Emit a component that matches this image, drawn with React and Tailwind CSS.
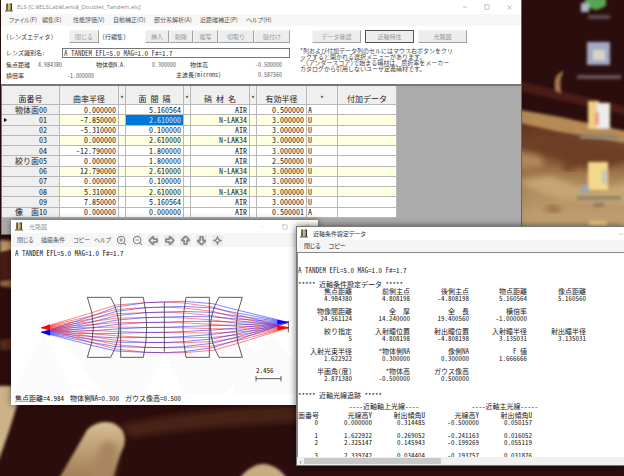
import { ZoomIn, ZoomOut, ArrowBigLeft, ArrowBigRight, ArrowBigUp, ArrowBigDown, Minus, Square, X } from "lucide-react";

const HALF = "[font-feature-settings:'hwid']";

const surfaces = [
  ["物体面00", "0.000000", "5.160564", "AIR", "0.500000", "A"],
  ["01", "-7.850000", "2.610000", "N-LAK34", "3.000000", "U"],
  ["02", "-5.310000", "0.100000", "AIR", "3.000000", "U"],
  ["03", "0.000000", "2.610000", "N-LAK34", "3.000000", "U"],
  ["04", "-12.790000", "1.800000", "AIR", "3.000000", "U"],
  ["絞り面05", "0.000000", "1.800000", "AIR", "2.500000", "U"],
  ["06", "12.790000", "2.610000", "N-LAK34", "3.000000", "U"],
  ["07", "0.000000", "0.100000", "AIR", "3.000000", "U"],
  ["08", "5.310000", "2.610000", "N-LAK34", "3.000000", "U"],
  ["09", "7.850000", "5.160564", "AIR", "3.000000", "U"],
  ["像\u3000\u3000面10", "0.000000", "0.000000", "AIR", "0.500001", "A"],
];

const paraxial = [
  [["焦点距離", "4.984380"], ["前側主点", "4.808198"], ["後側主点", "-4.808198"], ["物点距離", "5.160564"], ["像点距離", "5.160560"]],
  [["物像間距離", "24.561124"], ["全\u3000\u3000厚", "14.240000"], ["全\u3000\u3000長", "19.400560"], ["横倍率", "-1.000000"]],
  [["絞り指定", "5"], ["入射瞳位置", "4.808198"], ["射出瞳位置", "-4.808198"], ["入射瞳半径", "3.135031"], ["射出瞳半径", "3.135031"]],
  [["入射光束半径", "1.622922"], ["*物体側NA", "0.300000"], ["像側NA", "0.300000"], ["F 値", "1.666666"]],
  [["半画角(度)", "2.871380"], ["*物体高", "-0.500000"], ["ガウス像高", "0.500000"]],
];

const trace = [
  ["0", "0.000000", "0.314485", "-0.500000", "0.050157"],
  null,
  ["1", "1.622922", "0.269052", "-0.241163", "0.016052"],
  ["2", "2.325147", "0.145943", "-0.199269", "0.055119"],
  null,
  ["3", "2.339742", "0.034404", "-0.193757", "0.031876"],
];

const menus = ["ファイル(F)", "編集(E)", "性能評価(V)", "自動補正(O)", "部分系解析(A)", "近距離補正(P)", "ヘルプ(H)"];

function AppIcon() {
  return (
    <svg viewBox="0 0 8 9" className="h-[9px] w-2 shrink-0" aria-hidden="true">
      <path d="M1.2 0.5h2.2v7H1.2z" fill="#3d6b2c" />
      <path d="M1.2 3h1v4.500h-1z" fill="#c0562c" />
      <path d="M4.600 0.500h2.400v7H4.600z" fill="#3a2a20" />
      <path d="M4.800 1.500h1v5h-1z" fill="#d8b848" />
      <path d="M0 7.500h8v1H0z" fill="#5a4a30" />
    </svg>
  );
}

function PanIcon({ size }) {
  return (
    <svg viewBox="0 0 24 24" width={size} height={size} aria-hidden="true">
      <path d="M12 1L15.500 8.500L23 12L15.500 15.500L12 23L8.500 15.500L1 12L8.500 8.500z" fill="currentColor" />
      <path d="M12 9v6M9 12h6" stroke="#f6f6f6" strokeWidth="2" />
    </svg>
  );
}

function ToolButton({ children, className = "" }) {
  return (
    <button
      type="button"
      className={`h-[13px] whitespace-nowrap border border-b-[#a2a2a2] border-l-[#f4f4f4] border-r-[#a2a2a2] border-t-[#f4f4f4] bg-[#ededed] text-[6px] leading-none text-[#989898] ${className}`}
    >
      {children}
    </button>
  );
}

function Desktop() {
  return (
    <svg viewBox="0 0 624 476" preserveAspectRatio="xMidYMid slice" className="absolute inset-0 h-full w-full" aria-hidden="true">
      <defs>
        <filter id="soft" x="-20%" y="-20%" width="140%" height="140%"><feGaussianBlur stdDeviation="3" /></filter>
        <filter id="fine" x="-30%" y="-30%" width="160%" height="160%"><feGaussianBlur stdDeviation="1.500" /></filter>
        <linearGradient id="wood" x1="0" y1="0" x2="0" y2="1">
          <stop offset="0" stopColor="#5e301d" />
          <stop offset="0.300" stopColor="#7c4d2e" />
          <stop offset="0.500" stopColor="#a98255" />
          <stop offset="1" stopColor="#cbae80" />
        </linearGradient>
        <linearGradient id="finger" x1="0" y1="0" x2="0" y2="1">
          <stop offset="0" stopColor="#d8bf93" />
          <stop offset="1" stopColor="#a07a52" />
        </linearGradient>
      </defs>
      <rect width="624" height="476" fill="#2b0d0d" />
      <path d="M515 80L630 108V116L515 90z" fill="#4a1f14" filter="url(#fine)" />
      <path d="M515 118L630 140V240H515z" fill="url(#wood)" filter="url(#fine)" />
      <path d="M515 109L560 117L630 132V144L560 132L515 122z" fill="#b58a55" filter="url(#fine)" />
      <path d="M515 145L545 154L570 165L600 170L630 160V150L570 138z" fill="#6d3d25" filter="url(#soft)" />
      <path d="M515 182L550 176L590 190L630 182V205L560 200z" fill="#c6a673" filter="url(#soft)" />
      <path d="M515 150L540 156L545 166L515 170z" fill="#b08a5c" filter="url(#soft)" />
      <ellipse cx="553" cy="209" rx="8" ry="3" fill="#8f6238" filter="url(#soft)" />
      <ellipse cx="569" cy="167" rx="7" ry="3" fill="#64351f" filter="url(#soft)" />
      <path d="M562 73Q554 76 556 90L560 92Q558 78 562 73z" fill="#a87850" stroke="#a87850" strokeWidth="2" filter="url(#fine)" />
      <path d="M0 240L14 241V250L0 253z" fill="#b89468" filter="url(#fine)" />
      <path d="M0 253L14 250V276L0 280z" fill="#4a1c14" filter="url(#fine)" />
      <path d="M0 281L14 279V288L0 286z" fill="#90663f" filter="url(#fine)" />
      <path d="M0 340L14 338V350L0 350z" fill="#542a1c" filter="url(#fine)" />
      <path d="M-6 386H12Q22 396 16 408Q10 430 -2 462z" fill="#cdb289" filter="url(#fine)" />
      <path d="M120 425Q200 408 300 404V422Q200 426 130 438z" fill="#4a2018" filter="url(#soft)" />
      <path d="M58 480Q78 446 87 430Q98 419 113 423Q128 430 124 446Q118 458 112 480z" fill="url(#finger)" filter="url(#fine)" />
      <path d="M95 480Q93 455 104 442Q116 440 118 450L112 480z" fill="#a98660" filter="url(#soft)" />
      <path d="M238 480Q250 464 264 464Q278 465 288 480z" fill="#c9ad82" filter="url(#fine)" />
      <g filter="url(#fine)">
        <path d="M585 -2H606V6L597 10L585 7z" fill="#59a552" />
        <rect x="581" y="3" width="8" height="9" fill="#a9b9c9" />
        <rect x="588" y="15" width="22" height="4" fill="#5c4a52" />
        <rect x="587" y="42" width="23" height="23" fill="#a3a9c6" />
        <rect x="593" y="50" width="12" height="10" fill="#d8d4c4" />
        <rect x="577" y="75" width="44" height="4" fill="#66525a" />
        <rect x="588" y="101" width="11" height="28" fill="#f0cf84" />
        <rect x="597" y="103" width="13" height="26" fill="#efecec" />
        <rect x="595" y="112" width="4" height="13" fill="#ea9a86" />
        <rect x="580" y="135" width="38" height="4" fill="#8d8272" />
        <rect x="588" y="162" width="20" height="28" fill="#f4d88b" />
        <rect x="602" y="170" width="5" height="14" fill="#bcc9bd" />
        <rect x="581" y="185" width="8" height="8" fill="#9aa5ac" />
        <rect x="577" y="196" width="44" height="4" fill="#8f8568" />
        <rect x="594" y="203" width="10" height="4" fill="#8f7c60" />
        <rect x="589" y="221" width="18" height="8" fill="#f0cc7c" />
      </g>
    </svg>
  );
}

const RAYS = 11;

function rayPoints(index, field) {
  const s = index / (RAYS - 1);
  const between = (a, b) => a + (b - a) * s;
  const start = field === "red" ? 128 : 142;
  const end = field === "red" ? 128 : 112;
  const rise = field === "red" ? [82, 174, 60, 192] : [92, 182, 66, 198];
  const fall = field === "red" ? [66, 196, 89, 176] : [56, 188, 75, 165];
  return [
    [125, start],
    [279, between(rise[0], rise[1])],
    [348, between(rise[2], rise[3])],
    [437, between(53, 202)],
    [493, between(51, 203)],
    [551, between(field === "red" ? 54 : 49, field === "red" ? 203 : 200)],
    [638, between(fall[0], fall[1])],
    [711, between(fall[2], fall[3])],
    [865, end],
  ].map((p) => p.join(",")).join(" ");
}

function RayDiagram() {
  return (
    <svg viewBox="0 0 855 318" className="block h-[106px] w-[285px]" role="img" aria-label="光路図">
      <g transform="translate(-33 -9)">
        <g fill="#fbfbfb">
          <path d="M130 142L30 339H230z" />
          <path d="M230 142L190 160L310 339H430L493 205L560 339H660L780 220L720 150z" />
          <path d="M815 140L700 300V339H888V240z" />
        </g>
        <g fill="none" strokeWidth="2.200" strokeOpacity="0.750">
          {Array.from({ length: RAYS }, (_, i) => (
            <g key={i}>
              <polyline points={rayPoints(i, "red")} stroke="#ff2020" />
              <polyline points={rayPoints(i, "blue")} stroke="#2020ff" />
            </g>
          ))}
        </g>
        <path d="M124 128L150 118V136z" fill="#f00" />
        <path d="M124 142L150 134V152z" fill="#00f" />
        <path d="M864 112L832 104V118z" fill="#00f" />
        <path d="M864 128L832 122V136z" fill="#f00" />
        <g fill="none" stroke="#333" strokeWidth="2.400">
          <path d="M262 37H332Q382 127 332 217H262Q298 127 262 37z" />
          <path d="M362 37H430Q450 127 430 217H362z" />
          <path d="M558 37H628V217H558Q540 127 558 37z" />
          <path d="M657 37H727Q690 127 727 217H657Q606 127 657 37z" />
          <path d="M493 52V200M865 108V142" />
          <path d="M768 281H843M768 273V289M843 273V289" />
        </g>
      </g>
    </svg>
  );
}

function MainWindow() {
  const th = "border-r border-[#b8b8b8] p-0 pb-px align-bottom font-normal";
  const td = "border-b border-r border-[#b8b8b8] p-0 leading-none";
  return (
    <section className="absolute left-px top-0 flex h-[235px] w-[521px] flex-col border-b border-r border-[#666] bg-white shadow-lg">
      <header className="flex h-[14px] items-center gap-1 pl-1 text-[7px] text-[#888]">
        <AppIcon />
        <h1 className="grow font-['Open_Sans','Noto_Sans_CJK_JP',sans-serif] text-[6px]">ELS [C:¥ELSLab¥Lens¥_Doublet_Tandem.els]</h1>
        <div className="flex gap-4 pr-2 text-[#888]">
          <button type="button" aria-label="最小化"><Minus size={6} /></button>
          <button type="button" aria-label="最大化"><Square size={6} /></button>
          <button type="button" aria-label="閉じる"><X size={7} /></button>
        </div>
      </header>
      <nav className="grid h-3 grid-cols-[33px_31px_40px_41px_46px_46px_auto] items-center justify-start bg-[#f7f7f7] pl-2 text-[6px] leading-none text-[#555] [font-feature-settings:'palt']">
        {menus.map((m) => <button key={m} type="button" className="whitespace-nowrap text-left">{m}</button>)}
      </nav>
      <div className={`flex h-[58px] shrink-0 gap-[10px] pl-[5px] text-[6px] leading-none text-[#333] ${HALF}`}>
        <div className="flex w-[284px] shrink-0 flex-col pt-1">
          <div className="flex items-center whitespace-nowrap">
            <span className="w-[63px]">(レンズエディタ)</span>
            <ToolButton className="w-[30px]">閉じる</ToolButton>
            <span className="w-[46px] pl-[3px]">(行編集)</span>
            <ToolButton className="w-6">挿入</ToolButton>
            <ToolButton className="w-6">削除</ToolButton>
            <ToolButton className="w-[25px]">複写</ToolButton>
            <ToolButton className="w-9">切取り</ToolButton>
            <ToolButton className="w-9">貼付け</ToolButton>
          </div>
          <div className="flex items-center pt-[5px]">
            <label htmlFor="lens" className="w-14 whitespace-nowrap">レンズ識別名：</label>
            <input id="lens" defaultValue="A TANDEM EFL=5.0 MAG=1.0 F#=1.7" className="h-[10px] min-w-0 grow border border-[#777] px-px text-[7px] leading-none" />
          </div>
          <dl className="grid grid-cols-[32px_58px_56px_38px_49px_auto] gap-y-1 whitespace-nowrap pt-1">
            <dt>焦点距離</dt><dd className="text-[#666]">4.984380</dd>
            <dt>物体側N.A.</dt><dd className="text-[#666]">0.300000</dd>
            <dt>物体高</dt><dd className="pl-4 text-[#666]">-0.500000</dd>
            <dt className="pt-px">横倍率</dt><dd className="col-span-2 pl-[29px] pt-px text-[#666]">-1.000000</dd>
            <dt className="col-span-2 pl-6">主波長(microns)</dt><dd className="pl-[19px] text-[#666]">0.587560</dd>
          </dl>
        </div>
        <div className="flex flex-col gap-[5px] pt-1">
          <div className="flex gap-1 pl-3">
            <ToolButton className="w-[49px]">データ確認</ToolButton>
            <ToolButton className="w-[49px] outline outline-1 -outline-offset-1 outline-[#555]">近軸特性</ToolButton>
            <ToolButton className="w-[49px]">光路図</ToolButton>
          </div>
          <p className="whitespace-pre leading-[6px] text-[#444]">
            {"*列および付加データ列のセルにはマウス右ボタンをクリ\nックすると開かれる選択メニューがあります。\n“_（アンダースコア）で始まる硝材は、屈折率をメーカー\nカタログから引用しないユーザ定義硝材です。"}
          </p>
        </div>
      </div>
      <div className="min-h-0 grow overflow-hidden border-l border-t-2 border-[#777] bg-[#ababab]">
        <table className={`h-[132px] w-[395px] table-fixed border-separate border-spacing-0 bg-white text-[8px] leading-none text-[#222] ${HALF}`}>
          <colgroup>
            <col className="w-[58px]" /><col className="w-[59px]" /><col className="w-[7px]" /><col className="w-[58px]" /><col className="w-[7px]" />
            <col className="w-[59px]" /><col className="w-[7px]" /><col className="w-[50px]" /><col className="w-[31px]" /><col className="w-[59px]" />
          </colgroup>
          <thead>
            <tr className="h-[19px] bg-[#efefef]">
              {["面番号", "曲率半径", "*", "面 間 隔", "*", "硝 材 名", "*", "有効半径", "*", "付加データ"].map((h, i) => (
                <th key={i} scope="col" className={`${th} border-b`}>{h}</th>
              ))}
            </tr>
          </thead>
          <tbody>
            {surfaces.map((r, i) => (
              <tr key={r[0]} className={r[3] === "AIR" ? "bg-white" : "bg-[#ffffe1]"}>
                <th scope="row" className={`${td} bg-[#efefef] pr-3 text-right font-normal`}>
                  <span className="flex items-center justify-end whitespace-nowrap">
                    {i === 1 && <span className="ml-[2px] mr-auto border-y-2 border-l-[3px] border-y-transparent border-l-black" />}
                    {r[0]}
                  </span>
                </th>
                <td className={`${td} pr-[2px] text-right`}>{r[1]}</td>
                <td className={td} />
                <td className={`${td} pr-[2px] text-right ${i === 1 ? "bg-[#0078d7] text-[#cfe6fa]" : ""}`}>{r[2]}</td>
                <td className={td} />
                <td className={`${td} pr-[2px] text-right`}>{r[3]}</td>
                <td className={td} />
                <td className={`${td} pr-[2px] text-right`}>{r[4]}</td>
                <td className={`${td} pl-px text-left`}>{r[5]}</td>
                <td className={td} />
              </tr>
            ))}
          </tbody>
        </table>
      </div>
    </section>
  );
}

function RayWindow() {
  const icons = [["拡大", ZoomIn], ["縮小", ZoomOut], ["左", ArrowBigLeft], ["右", ArrowBigRight], ["上", ArrowBigUp], ["下", ArrowBigDown], ["移動", PanIcon]];
  return (
    <section className="absolute left-[11px] top-[220px] flex h-[185px] w-[307px] flex-col bg-white shadow-[0_0_6px_rgba(0,0,0,0.5)]">
      <header className="flex h-[13px] shrink-0 items-center gap-[6px] pl-1 text-[6px] text-[#999]">
        <AppIcon />
        <h2 className="grow">光路図</h2>
        <div className="flex gap-4 pr-[7px]">
          <button type="button" aria-label="最小化" className="text-[#ddd]"><Minus size={6} /></button>
          <button type="button" aria-label="最大化"><Square size={6} /></button>
          <button type="button" aria-label="閉じる"><X size={7} /></button>
        </div>
      </header>
      <nav className="flex h-[14px] shrink-0 items-center bg-[#f6f6f6] pl-[6px] text-[6px] leading-none text-[#555] [font-feature-settings:'palt']">
        <div className="grid w-[99px] shrink-0 grid-cols-[24px_32px_21px_auto]">
          {["閉じる", "描画条件", "コピー", "ヘルプ"].map((m) => <button key={m} type="button" className="whitespace-nowrap text-left">{m}</button>)}
        </div>
        <div className="flex gap-[5px] text-[#8a8a8a]">
          {icons.map(([name, Icon], i) => (
            <button key={name} type="button" aria-label={name} className={i > 1 ? "bg-[#ebebeb]" : ""}>
              <Icon size={11} strokeWidth={i > 1 ? 4 : 2.5} />
            </button>
          ))}
        </div>
      </nav>
      <div className={`flex grow flex-col pt-[3px] text-[7px] leading-none text-[#111] ${HALF}`}>
        <p className="whitespace-nowrap pl-1">A TANDEM EFL=5.0 MAG=1.0 F#=1.7</p>
        <div className="relative pt-[31px]">
          <RayDiagram />
          <span className="absolute bottom-5 left-[245px]">2.456</span>
        </div>
        <p className="flex gap-[6px] whitespace-nowrap pl-1 pt-px">
          <span>焦点距離＝4.984</span><span>物体側NA＝0.300</span><span>ガウス像高＝0.500</span>
        </p>
      </div>
    </section>
  );
}

function DataWindow() {
  return (
    <section className="absolute left-[296px] right-0 top-[226px] flex h-[240px] flex-col border border-r-0 border-[#777] bg-white shadow-[0_0_7px_rgba(0,0,0,0.6)]">
      <header className="flex h-[13px] shrink-0 items-center gap-[5px] pl-[3px] text-[6px] text-[#333]">
        <AppIcon />
        <h2 className="grow [font-feature-settings:'palt']">近軸条件設定データ</h2>
        <button type="button" aria-label="最小化" className="text-[#999]"><Minus size={6} /></button>
      </header>
      <nav className="flex h-3 shrink-0 items-center gap-2 bg-[#f5f5f5] pl-[7px] text-[6px] leading-none text-[#222] [font-feature-settings:'palt']">
        <button type="button">閉じる</button>
        <button type="button">コピー</button>
      </nav>
      <div className={`min-h-0 grow overflow-hidden whitespace-nowrap border-l border-t border-[#888] pt-[14px] text-[7px] leading-[7px] text-[#222] ${HALF}`}>
        <p>A TANDEM EFL=5.0 MAG=1.0 F#=1.7</p>
        <h3 className="pt-[7px]">***** 近軸条件設定データ *****</h3>
        <div className="flex flex-col gap-[6px]">
          {paraxial.map((row, i) => (
            <dl key={i} className="grid grid-cols-[54px_58px_59px_58px_59px] text-right">
              {row.map(([name, value]) => (
                <div key={name} className="flex flex-col items-end"><dt>{name}</dt><dd>{value}</dd></div>
              ))}
            </dl>
          ))}
        </div>
        <h3 className="pt-[10px]">***** 近軸光線追跡 *****</h3>
        <table className="mt-1 w-[240px] table-fixed border-separate border-spacing-0 text-right">
          <colgroup><col className="w-5" /><col className="w-[54px]" /><col className="w-[53px]" /><col className="w-[54px]" /><col className="w-[53px]" /><col className="w-[6px]" /></colgroup>
          <thead>
            <tr className="align-top">
              <td className="p-0" />
              <th colSpan={2} className="p-0 pb-[2px] pr-[6px] font-normal">----近軸軸上光線----</th>
              <th colSpan={3} className="p-0 pb-[2px] font-normal">----近軸主光線-----</th>
            </tr>
            <tr>{["面番号", "光線高Y", "射出傾角U", "光線高Y", "射出傾角U"].map((h, i) => <th key={i} scope="col" className="p-0 font-normal">{h}</th>)}</tr>
          </thead>
          <tbody>
            {trace.map((r, i) => r
              ? <tr key={i}>{r.map((v, j) => <td key={j} className="p-0">{v}</td>)}</tr>
              : <tr key={i}><td className="h-[6px] p-0" /></tr>)}
          </tbody>
        </table>
      </div>
      <div className="flex h-2 shrink-0 items-center bg-[#f0f0f0] text-[7px] leading-none text-[#444]">
        <button type="button" aria-label="左へスクロール" className="w-[7px]">‹</button>
        <div className="h-[6px] w-[137px] bg-[#c9c9c9]" />
      </div>
    </section>
  );
}

export default function App() {
  return (
    <main className="relative h-screen w-full overflow-hidden bg-[#2b0d0d] font-['Noto_Sans_CJK_JP',sans-serif]">
      <Desktop />
      <MainWindow />
      <RayWindow />
      <DataWindow />
    </main>
  );
}
